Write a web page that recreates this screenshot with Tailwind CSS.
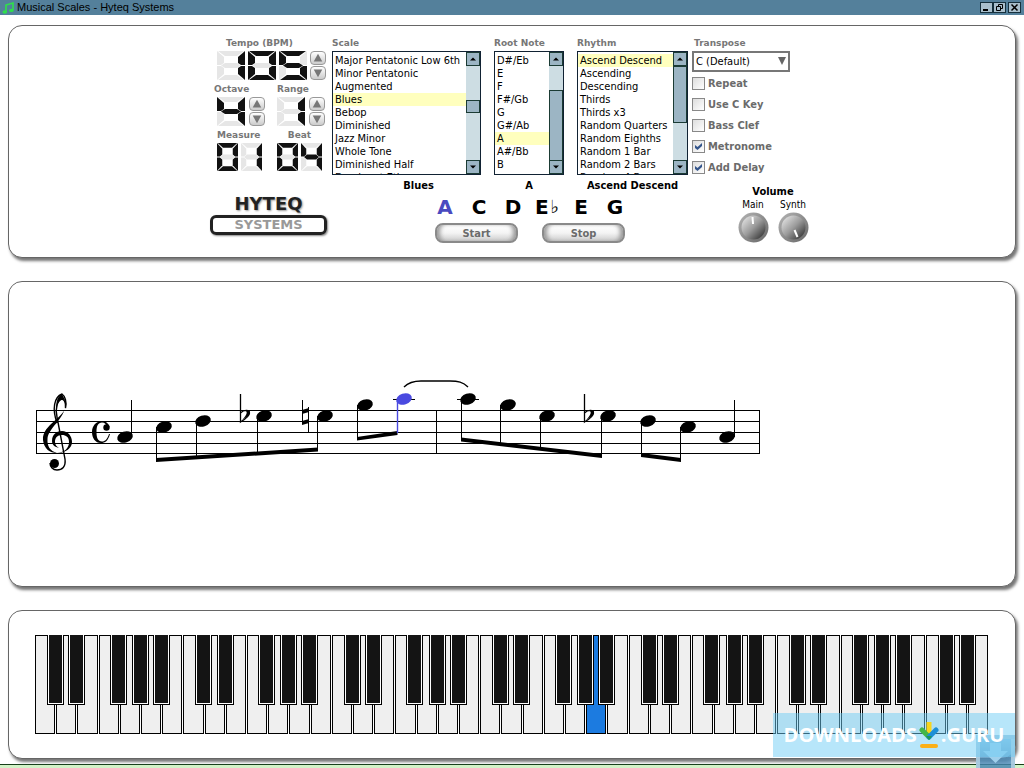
<!DOCTYPE html>
<html lang="en">
<head>
    <meta charset="UTF-8">
    <meta name="viewport" content="width=device-width, initial-scale=1.0">
    <title>Musical Scales - Hyteq Systems</title>
    <script src="https://cdn.jsdelivr.net/npm/@tailwindcss/browser@4"></script>
</head>
<body class="relative min-h-screen flex flex-col overflow-hidden bg-white text-black text-[11px] leading-[13px] font-['DejaVu_Sans_Condensed','DejaVu_Sans',sans-serif]">

    <!-- Title bar -->
    <header class="h-[15px] shrink-0 bg-[#54809b] flex items-center justify-between pl-0.5 pr-[3px]">
        <div class="flex items-center gap-[3px]">
            <svg class="w-3 h-3" viewBox="0 0 12 12"><path d="M4 10V3l7-2v7" fill="none" stroke="#2fe04a" stroke-width="1.6"/><ellipse cx="2.8" cy="10" rx="2.3" ry="1.7" fill="#2fe04a"/><ellipse cx="9.4" cy="8.4" rx="2.3" ry="1.7" fill="#2fe04a"/></svg>
            <h1 class="text-[11px] font-['Liberation_Sans',sans-serif]">Musical Scales - Hyteq Systems</h1>
        </div>
        <div class="flex">
            <button aria-label="Minimize" class="w-[13px] h-[11px] bg-[#a9bfcc] border border-[#16303c]"><svg viewBox="0 0 11 9"><path d="M2 7h5" stroke="#000" stroke-width="2"/></svg></button>
            <button aria-label="Restore" class="w-[13px] h-[11px] bg-[#a9bfcc] border border-[#16303c]"><svg viewBox="0 0 11 9"><path d="M4.5 3V1.5h4v4H7M2.5 3.5h4v4h-4z" fill="none" stroke="#000"/></svg></button>
            <button aria-label="Close" class="w-[13px] h-[11px] ml-0.5 bg-[#a9bfcc] border border-[#16303c]"><svg viewBox="0 0 11 9"><path d="M2.5 1.5l6 6m0-6l-6 6" stroke="#000" stroke-width="1.5"/></svg></button>
        </div>
    </header>

    <main class="px-2 pt-[10px] flex flex-col gap-[23px]">

        <!-- Controls -->
        <section class="h-[233px] border border-[#666] rounded-[14px] bg-white shadow-[2px_3px_3px_#777] pt-[11px]">
            <div class="w-[604px] mx-auto flex items-start">

                <div class="w-[122px] shrink-0">
                    <div class="pl-[7px] flex flex-col gap-[3px] font-bold text-[9px] leading-3 text-[#777] font-['DejaVu_Sans',sans-serif]">
                        <div>
                            <p class="pl-[9px]">Tempo (BPM)</p>
                            <div class="flex gap-[3px] mt-0.5">
                                <div class="flex gap-[3px]" data-digits="105" data-size="large"></div>
                                <div class="flex flex-col gap-px" data-stepper="Tempo"></div>
                            </div>
                        </div>
                        <div class="flex">
                            <div class="w-[60px]">
                                <p class="-ml-[3px]">Octave</p>
                                <div class="flex gap-1 mt-0.5">
                                    <div class="flex" data-digits="4" data-size="large"></div>
                                    <div class="flex flex-col gap-px" data-stepper="Octave"></div>
                                </div>
                            </div>
                            <div>
                                <p>Range</p>
                                <div class="flex gap-1 mt-0.5">
                                    <div class="flex" data-digits="1" data-size="large"></div>
                                    <div class="flex flex-col gap-px" data-stepper="Range"></div>
                                </div>
                            </div>
                        </div>
                        <div class="flex">
                            <div class="w-[60px]">
                                <p>Measure</p>
                                <div class="flex gap-[3px] mt-0.5" data-digits="01" data-size="small"></div>
                            </div>
                            <div>
                                <p class="text-center">Beat</p>
                                <div class="flex gap-[3px] mt-0.5" data-digits="04" data-size="small"></div>
                            </div>
                        </div>
                    </div>

                    <!-- Logo -->
                    <div class="mt-[22px] w-[117px] text-center font-bold font-['DejaVu_Sans',sans-serif]">
                        <p class="text-[18px] leading-[22px] text-[#222] [text-shadow:1px_1px_2px_#999]">HYTEQ</p>
                        <p class="text-[13px] leading-[14px] text-[#999] border-[3px] border-[#222] rounded-md shadow-[1px_1px_2px_#888]">SYSTEMS</p>
                    </div>
                </div>

                <div class="w-[356px] shrink-0">
                    <div class="flex gap-[13px]">
                        <div class="w-[149px]">
                            <label for="scale" class="block mb-0.5 font-bold text-[9px] leading-3 text-[#777] font-['DejaVu_Sans',sans-serif]">Scale</label>
                            <div class="flex h-[124px] border border-[#123]">
                                <select id="scale" size="10" class="flex-1 min-w-0 overflow-hidden pt-0.5 outline-none"></select>
                                <div class="w-[14px] bg-[#cddde3] relative flex flex-col justify-between" data-scrollbar>
                                    <div class="absolute inset-x-0 top-[48px] h-[13px] bg-[#9cb5c4] border border-[#1b3b34]"></div>
                                </div>
                            </div>
                            <p class="mt-1 pl-6 text-center font-bold">Blues</p>
                        </div>
                        <div class="w-[70px]">
                            <label for="root" class="block mb-0.5 font-bold text-[9px] leading-3 text-[#777] whitespace-nowrap font-['DejaVu_Sans',sans-serif]">Root Note</label>
                            <div class="flex h-[124px] border border-[#123]">
                                <select id="root" size="9" class="flex-1 min-w-0 overflow-hidden pt-0.5 outline-none"></select>
                                <div class="w-[14px] bg-[#cddde3] relative flex flex-col justify-between" data-scrollbar>
                                    <div class="absolute inset-x-0 top-[38px] h-[71px] bg-[#9cb5c4] border border-[#1b3b34]"></div>
                                </div>
                            </div>
                            <p class="mt-1 text-center font-bold">A</p>
                        </div>
                        <div class="w-[111px]">
                            <label for="rhythm" class="block mb-0.5 font-bold text-[9px] leading-3 text-[#777] font-['DejaVu_Sans',sans-serif]">Rhythm</label>
                            <div class="flex h-[124px] border border-[#123]">
                                <select id="rhythm" size="10" class="flex-1 min-w-0 overflow-hidden pt-0.5 outline-none"></select>
                                <div class="w-[14px] bg-[#cddde3] relative flex flex-col justify-between" data-scrollbar>
                                    <div class="absolute inset-x-0 top-[14px] h-[57px] bg-[#9cb5c4] border border-[#1b3b34]"></div>
                                </div>
                            </div>
                            <p class="mt-1 text-center font-bold whitespace-nowrap">Ascend Descend</p>
                        </div>
                    </div>

                    <div class="pl-10 mt-[3px] flex flex-col items-center">
                        <div class="flex text-center font-bold text-[20px] leading-6 font-['DejaVu_Sans',sans-serif]">
                            <span class="w-[34px] text-[#4a4ac0]">A</span>
                            <span class="w-[34px]">C</span>
                            <span class="w-[34px]">D</span>
                            <span class="w-[34px] flex justify-center gap-0.5">E<span class="text-[18px] font-normal">♭</span></span>
                            <span class="w-[34px]">E</span>
                            <span class="w-[34px]">G</span>
                        </div>
                        <div class="flex gap-6 mt-1">
                            <button class="w-[83px] h-5 rounded-lg border-2 border-[#8a8a8a] bg-linear-to-b from-white via-[#f4f4f4] to-[#ccc] shadow-[inset_5px_0_4px_-2px_#999,inset_-5px_0_4px_-2px_#999] font-bold text-[#6b6b6b]">Start</button>
                            <button class="w-[83px] h-5 rounded-lg border-2 border-[#8a8a8a] bg-linear-to-b from-white via-[#f4f4f4] to-[#ccc] shadow-[inset_5px_0_4px_-2px_#999,inset_-5px_0_4px_-2px_#999] font-bold text-[#6b6b6b]">Stop</button>
                        </div>
                    </div>
                </div>

                <div class="pl-1 w-[126px]">
                    <label for="transpose" class="block mb-0.5 pl-0.5 font-bold text-[9px] leading-3 text-[#777] font-['DejaVu_Sans',sans-serif]">Transpose</label>
                    <div class="relative w-[98px]">
                        <select id="transpose" class="appearance-none block w-full h-[21px] border-2 border-[#777] bg-white pl-0.5">
                            <option>C (Default)</option>
                        </select>
                        <svg class="absolute right-1 top-1.5 w-2 h-2 pointer-events-none" viewBox="0 0 8 8"><path d="M0 0h8L4 8z" fill="#666"/></svg>
                    </div>
                    <div class="mt-[5px] flex flex-col gap-2 font-bold text-[#6b6b6b]">
                        <label class="flex items-center gap-[3px]"><input type="checkbox" class="appearance-none w-[13px] h-[13px] border border-[#888] bg-linear-to-br from-[#ddd] to-white">Repeat</label>
                        <label class="flex items-center gap-[3px]"><input type="checkbox" class="appearance-none w-[13px] h-[13px] border border-[#888] bg-linear-to-br from-[#ddd] to-white">Use C Key</label>
                        <label class="flex items-center gap-[3px]"><input type="checkbox" class="appearance-none w-[13px] h-[13px] border border-[#888] bg-linear-to-br from-[#ddd] to-white">Bass Clef</label>
                        <label class="relative flex items-center gap-[3px]"><input type="checkbox" checked class="appearance-none w-[13px] h-[13px] border border-[#888] bg-linear-to-br from-[#ddd] to-white">Metronome<svg class="absolute left-[3px] top-[3px] w-[7px] h-[7px]" viewBox="0 0 7 7"><path d="M0 2l2.5 2L7 0v3L2.5 7 0 5z" fill="#34558b"/></svg></label>
                        <label class="relative flex items-center gap-[3px]"><input type="checkbox" checked class="appearance-none w-[13px] h-[13px] border border-[#888] bg-linear-to-br from-[#ddd] to-white">Add Delay<svg class="absolute left-[3px] top-[3px] w-[7px] h-[7px]" viewBox="0 0 7 7"><path d="M0 2l2.5 2L7 0v3L2.5 7 0 5z" fill="#34558b"/></svg></label>
                    </div>

                    <div class="mt-[11px] ml-[42px] w-[78px] text-center">
                        <p class="font-bold">Volume</p>
                        <div class="flex justify-between">
                            <div class="w-[38px] flex flex-col items-center gap-px text-[10px]">
                                <span>Main</span>
                                <svg class="w-[31px] h-[31px]" viewBox="0 0 31 31"><circle cx="15.5" cy="15.5" r="15" fill="url(#rim)"/><circle cx="15.5" cy="15.5" r="12" fill="url(#knob)"/><path d="M14.5 5l.5 7" stroke="#fff" stroke-width="2"/></svg>
                            </div>
                            <div class="w-[38px] flex flex-col items-center gap-px text-[10px]">
                                <span>Synth</span>
                                <svg class="w-[31px] h-[31px]" viewBox="0 0 31 31">
                                    <defs>
                                        <linearGradient id="rim" x1="0" y1="0" x2="1" y2="1"><stop offset="0" stop-color="#b5b5b5"/><stop offset="1" stop-color="#666"/></linearGradient>
                                        <linearGradient id="knob" x1="0" y1="0" x2="1" y2="1"><stop offset="0" stop-color="#f0f0f0"/><stop offset=".5" stop-color="#9a9a9a"/><stop offset="1" stop-color="#222"/></linearGradient>
                                    </defs>
                                    <circle cx="15.5" cy="15.5" r="15" fill="url(#rim)"/><circle cx="15.5" cy="15.5" r="12" fill="url(#knob)"/><path d="M16.5 18l3 7" stroke="#fff" stroke-width="2"/>
                                </svg>
                            </div>
                        </div>
                    </div>
                </div>
            </div>
        </section>

        <!-- Score -->
        <section class="h-[306px] border border-[#666] rounded-[14px] bg-white shadow-[2px_3px_3px_#777] pl-[21px] pt-[93px]">
            <svg class="w-[740px] h-[100px]" viewBox="30 375 740 100">
                <g stroke="#000" fill="none">
                    <path d="M36 410.5h724M36 421.5h724M36 432.5h724M36 443.5h724M36 453.5h724M36.5 410v44M436.5 410v44M759.5 410v44"/>
                    <path d="M393 399.5h22M457 399.5h22"/>
                    <path d="M131.5 437V400M156.5 427v33M196.5 422v36M257.5 416v38M317.5 416v35M357.5 405v34M461.5 400v40M500.5 405v39M540.5 416v33M601.5 416v41M641.5 421v34M680.5 427v33M734.5 437V400"/>
                    <path d="M404 387C409 382 414 381 421 381h29c8 0 13 1 18 6" stroke-width="1.4"/>
                </g>
                <path d="M156 458l162-10.5v4L156 462zM357 437l40.5-6v4L357 440.5zM461 437.5l141 16.5v4l-141-16.5zM641 453l40 5v4l-40-5z"/>
                <path d="M397.5 400v33" stroke="#4a4ae0" stroke-width="1.4"/>
                <g id="heads"></g>

                <!-- treble clef -->
                <path d="M66 404C66 418 42 424 43 440C44 449 50 453 57 453C50 451 47 446 47.5 439C48 428 64 420 66 404Z"/>
                <path d="M52 441C52 434 57 431 62 431C68 431 72 436 72 442C72 448 66 453 57 453C65 452 69 448 69 442C69 437 66 435 62 435C57 435 55 438 55 442C55 445 57 447 59 448C55 447 52 445 52 441Z"/>
                <path d="M57 423C52 409 54 397 62 394C65 396 67 402 65.5 408C66 402 64 399 61.5 399C57 401 55 409 57 417L65 459C66 467 62 470 57 470C53 470 50 467 50 463" fill="none" stroke="#000" stroke-width="1.4"/>
                <path d="M57 410C55 402 58 396 62 394L65.5 401C62 397 57 400 57 410Z"/>
                <circle cx="54.5" cy="463.5" r="4.5"/>

                <!-- common time -->
                <path d="M110 434C108 441 105 443 101 443C95 443 92 438 92 432C92 426 96 421 102 421C106 421 109 424 109.5 427L107 427C106 424 105 422.5 102 422.5C98 422.5 96.5 426 96.5 432C96.5 438 98 441.5 102 441.5C105 441.5 107.5 439 109 434Z"/>
                <circle cx="106.5" cy="427.5" r="3.2"/>

                <!-- accidentals -->
                <g id="flat">
                    <path d="M240.5 394v28c5-3 9-6 9-9 0-3-5-4-9 0" fill="none" stroke="#000" stroke-width="1.3"/>
                    <path d="M245 411c3 0 2 4-3 9 5-3 8-5 8-8 0-2-3-3-5-1z"/>
                </g>
                <use href="#flat" x="344"/>
                <path d="M302.5 400v24M308.5 407v25" stroke="#000"/>
                <path d="M302 410l7-2v4l-7 2zM302 421l7-2v4l-7 2z"/>
            </svg>
        </section>

        <!-- Keyboard -->
        <section class="relative h-[149px] border border-[#666] rounded-[14px] bg-white shadow-[2px_3px_3px_#777] pl-[26px] pr-[27px] pt-6">
            <div id="keyboard" class="flex gap-px h-[99px]"></div>

            <div class="absolute z-20 right-0 top-[102px] w-[242px] h-[44px] bg-[#6fcdf5]/50 flex items-center justify-center gap-0.5 text-white font-bold text-[20px] leading-7 font-['Open_Sans',sans-serif]">
                <span>DOWNLOADS</span>
                <svg class="w-5 h-[26px] shrink-0" viewBox="0 0 20 26"><path d="M10 0v14" stroke="#f9d51c" stroke-width="5"/><path d="M3 8l7 7" stroke="#43b649" stroke-width="5" stroke-linecap="round"/><path d="M17 8l-7 7" stroke="#1d8fd6" stroke-width="5" stroke-linecap="round"/><path d="M7 14h6l-3 4z" fill="#1f9a56"/><path d="M3 24h14" stroke="#fbb018" stroke-width="4" stroke-linecap="round"/></svg>
                <span>.GURU</span>
            </div>
        </section>
    </main>

    <footer class="mt-auto h-[4px] bg-[#d3f3c8] border-t border-[#17401a]"></footer>

    <div class="absolute right-[9px] bottom-0 w-[39px] h-[33px] border-x-4 border-t-4 border-[#b9d6e6]/80 bg-linear-to-b from-[#6fb4dd]/80 to-[#3f7fae]/80">
        <svg class="w-full h-full" viewBox="0 0 31 29"><path d="M10 4h11v8h7L15.5 24 3 12h7z" fill="#9fd0ec"/></svg>
    </div>

    <script>
        // Seven segment display, order a b c d e f g
        const segments = [
            '1,0 27,0 20,5 8,5',
            '28,0 28,14 24,14 21,12 21,6',
            '28,15 28,29 21,23 21,17 24,15',
            '1,29 27,29 20,24 8,24',
            '0,29 0,15 4,15 7,17 7,23',
            '0,0 7,6 7,12 4,14 0,14',
            '4,14.5 8,12 20,12 24,14.5 20,17 8,17'
        ];
        const numbers = { 0: '1111110', 1: '0110000', 4: '0110011', 5: '1011011' };
        document.querySelectorAll('[data-digits]').forEach(el => {
            const size = el.dataset.size === 'large' ? 'w-7 h-[29px]' : 'w-[21px] h-[28px]';
            el.innerHTML = [...el.dataset.digits].map(n =>
                `<svg class="${size}" viewBox="0 0 28 29" preserveAspectRatio="none">` +
                segments.map((p, i) => `<polygon points="${p}" fill="${numbers[n][i] === '1' ? '#111' : '#e6e6e6'}"/>`).join('') +
                '</svg>').join('');
        });

        document.querySelectorAll('[data-stepper]').forEach(el => {
            el.innerHTML = [['up', 'M8 2l5 9H3z'], ['down', 'M3 3h10l-5 9z']].map(([dir, d]) =>
                `<button aria-label="${el.dataset.stepper} ${dir}" class="w-4 h-[14px] rounded-sm border border-[#999] bg-linear-to-b from-white to-[#ccc] flex"><svg class="w-full h-full" viewBox="1 0 14 14"><path d="${d}" fill="#777"/></svg></button>`).join('');
        });

        // List boxes
        const lists = {
            scale: ['Major Pentatonic Low 6th', 'Minor Pentatonic', 'Augmented', 'Blues', 'Bebop', 'Diminished', 'Jazz Minor', 'Whole Tone', 'Diminished Half', 'Dominant 7th'],
            root: ['D#/Eb', 'E', 'F', 'F#/Gb', 'G', 'G#/Ab', 'A', 'A#/Bb', 'B'],
            rhythm: ['Ascend Descend', 'Ascending', 'Descending', 'Thirds', 'Thirds x3', 'Random Quarters', 'Random Eighths', 'Random 1 Bar', 'Random 2 Bars', 'Random 4 Bars']
        };
        const selected = { scale: 'Blues', root: 'A', rhythm: 'Ascend Descend' };
        for (const id in lists) {
            document.getElementById(id).innerHTML = lists[id].map(t =>
                `<option class="p-0 pl-0.5 min-h-0 h-[13px] leading-[13px] text-black checked:bg-[linear-gradient(#ffffbe,#ffffbe)]"${t === selected[id] ? ' selected' : ''}>${t}</option>`).join('');
        }
        document.querySelectorAll('[data-scrollbar]').forEach(el => {
            const arrow = d => `<button aria-label="Scroll" class="w-[14px] h-[14px] bg-[#9cb5c4] border border-[#1b3b34]"><svg viewBox="0 0 12 12"><path d="${d}"/></svg></button>`;
            el.insertAdjacentHTML('afterbegin', arrow('M3 7.5h6L6 4.5z'));
            el.insertAdjacentHTML('beforeend', arrow('M3 4.5h6L6 7.5z'));
        });

        // Note heads
        const notes = [[125, 437], [164, 427], [203, 421], [264, 416], [325, 416], [365, 405], [404, 399], [468, 399], [508, 405], [547, 416], [608, 416], [648, 421], [688, 427], [727, 437]];
        document.getElementById('heads').innerHTML = notes.map(([x, y], i) =>
            `<ellipse cx="${x}" cy="${y}" rx="8" ry="5.5" transform="rotate(-18 ${x} ${y})" fill="${i === 6 ? '#4a4ae0' : '#000'}"/>`).join('');

        // Piano keys: black key to the right of C D F G A
        const offset = { 0: 'left-[11px]', 1: 'left-[11px]', 3: 'left-[10px]', 4: 'left-[11px]', 5: 'left-[11px]' };
        let html = '';
        for (let i = 0; i < 45; i++) {
            const n = i % 7;
            const black = offset[n] && i < 44
                ? `<button aria-label="Black key" class="absolute z-10 -top-px ${offset[n]} w-[17px] h-[70px] border border-t-0 border-black bg-white px-px pb-px"><span class="block h-full bg-[#141414]"></span></button>` : '';
            html += `<div class="relative flex-1 border border-black ${i === 26 ? 'bg-[#1c7be0]' : 'bg-[#efefef]'}">${black}</div>`;
        }
        document.getElementById('keyboard').innerHTML = html;
    </script>
</body>
</html>
